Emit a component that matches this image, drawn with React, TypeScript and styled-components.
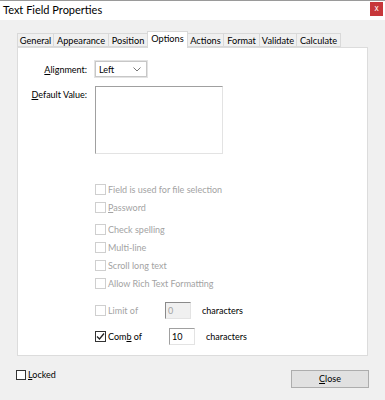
import styled, { createGlobalStyle } from "styled-components";

const GlobalStyle = createGlobalStyle`
  html, body {
    margin: 0;
    padding: 0;
    background: #f0f0f0;
  }
  * {
    box-sizing: border-box;
  }
`;

const tabs = [
  { name: "General", w: 37 },
  { name: "Appearance", w: 56 },
  { name: "Position", w: 40 },
  { name: "Options", w: 41 },
  { name: "Actions", w: 37 },
  { name: "Format", w: 37 },
  { name: "Validate", w: 38 },
  { name: "Calculate", w: 45 },
];

interface CheckProps {
  checked?: boolean;
  disabled?: boolean;
}

const Check: React.FC<CheckProps> = ({ checked, disabled }) => (
  <Box $disabled={disabled}>
    {checked && (
      <svg width="9" height="9" viewBox="0 0 9 9">
        <path d="M1 4.5 L3.5 7 L8 1.5" fill="none" stroke="#222" strokeWidth="1.3" />
      </svg>
    )}
  </Box>
);

const App = () => {
  return (
    <Window>
      <GlobalStyle />
      <TitleBar>
        <Title>Text Field Properties</Title>
        <CloseX>x</CloseX>
      </TitleBar>
      <Body>
        <TabStrip>
          {tabs.map((t) => (
            <Tab key={t.name} $w={t.w} $active={t.name === "Options"}>
              {t.name}
            </Tab>
          ))}
        </TabStrip>
        <Panel>
          <FieldRow>
            <Label>
              <U>A</U>lignment:
            </Label>
            <Select>
              <span>Left</span>
              <svg width="8" height="5" viewBox="0 0 8 5">
                <path d="M0.5 0.5 L4 4 L7.5 0.5" fill="none" stroke="#777" strokeWidth="1" />
              </svg>
            </Select>
          </FieldRow>
          <FieldRow $top>
            <Label $top>
              <U>D</U>efault Value:
            </Label>
            <TextArea />
          </FieldRow>

          <Checks>
            <Group>
              <CheckRow $disabled>
                <Check disabled />
                <span>Field is used for file selection</span>
              </CheckRow>
              <CheckRow $disabled>
                <Check disabled />
                <span>
                  <U>P</U>assword
                </span>
              </CheckRow>
            </Group>
            <Group>
              <CheckRow $disabled>
                <Check disabled />
                <span>Check spelling</span>
              </CheckRow>
              <CheckRow $disabled>
                <Check disabled />
                <span>Multi-line</span>
              </CheckRow>
              <CheckRow $disabled>
                <Check disabled />
                <span>Scroll long text</span>
              </CheckRow>
              <CheckRow $disabled>
                <Check disabled />
                <span>Allow Rich Text Formatting</span>
              </CheckRow>
            </Group>
            <CountRow $disabled $gap={5}>
              <Check disabled />
              <CountLabel $w={55}>Limit of</CountLabel>
              <Num $disabled>0</Num>
              <Chars>characters</Chars>
            </CountRow>
            <CountRow $gap={8}>
              <Check checked />
              <CountLabel $w={59}>
                Com<U>b</U> of
              </CountLabel>
              <Num>10</Num>
              <Chars>characters</Chars>
            </CountRow>
          </Checks>
        </Panel>
        <Footer>
          <LockRow>
            <LockBox />
            <span>
              <U>L</U>ocked
            </span>
          </LockRow>
          <Button>
            <U>C</U>lose
          </Button>
        </Footer>
      </Body>
    </Window>
  );
};

export default App;

const Window = styled.div`
  width: 385px;
  height: 400px;
  background: #f0f0f0;
  font-family: Lato, "Noto Sans", sans-serif;
  color: #000;
  display: flex;
  flex-direction: column;
  overflow: hidden;
`;

const TitleBar = styled.div`
  height: 20px;
  background: #ffffff;
  border-top: 1px solid #9a9a9a;
  display: flex;
  align-items: flex-start;
  justify-content: space-between;
`;

const Title = styled.div`
  font-size: 11px;
  line-height: 16px;
  padding-left: 3px;
  margin-top: 1px;
`;

const CloseX = styled.div`
  width: 13px;
  height: 14px;
  margin: 1px 2px 0 0;
  background: #c7373a;
  color: #fff;
  font-family: "Noto Sans", sans-serif;
  font-size: 8px;
  line-height: 12px;
  text-align: center;
`;

const Body = styled.div`
  flex: 1;
  display: flex;
  flex-direction: column;
  padding: 11px 17px 0 17px;
`;

const TabStrip = styled.div`
  display: flex;
  align-items: flex-end;
  height: 16px;
  position: relative;
  z-index: 1;
`;

const Tab = styled.div<{ $active?: boolean; $w: number }>`
  width: ${(p) => p.$w}px;
  flex: none;
  height: ${(p) => (p.$active ? "17px" : "14px")};
  margin-bottom: ${(p) => (p.$active ? "-1px" : "0")};
  margin-left: -1px;
  padding-bottom: ${(p) => (p.$active ? "3px" : "0")};
  background: ${(p) => (p.$active ? "#ffffff" : "#f0f0f0")};
  border: 1px solid #d9d9d9;
  border-bottom: ${(p) => (p.$active ? "none" : "1px solid #d9d9d9")};
  font-size: 9.2px;
  line-height: 13px;
  text-align: center;
  white-space: nowrap;
  &:first-child {
    margin-left: 0;
  }
`;

const Panel = styled.div`
  height: 309px;
  background: #ffffff;
  border: 1px solid #dcdcdc;
  padding-top: 13px;
  display: flex;
  flex-direction: column;
`;

const FieldRow = styled.div<{ $top?: boolean }>`
  display: grid;
  grid-template-columns: 69px auto;
  column-gap: 8px;
  align-items: ${(p) => (p.$top ? "start" : "center")};
  margin-bottom: 9px;
`;

const Label = styled.div<{ $top?: boolean }>`
  font-size: 9px;
  text-align: right;
  white-space: nowrap;
  line-height: 13px;
  padding-top: ${(p) => (p.$top ? "2px" : "0")};
`;

const U = styled.span`
  text-decoration: underline;
`;

const Select = styled.div`
  width: 52px;
  height: 16px;
  border: 1px solid #c7c7c7;
  outline: 1px solid #e3e3e3;
  background: #ffffff;
  display: flex;
  align-items: center;
  justify-content: space-between;
  padding: 0 5px 0 3px;
  font-size: 9px;
`;

const TextArea = styled.div`
  width: 128px;
  height: 68px;
  border-top: 1px solid #a0a0a0;
  border-left: 1px solid #a0a0a0;
  border-right: 1px solid #e3e3e3;
  border-bottom: 1px solid #e3e3e3;
`;

const Checks = styled.div`
  margin-left: 77px;
  margin-top: 17px;
  display: flex;
  flex-direction: column;
`;

const Group = styled.div`
  display: flex;
  flex-direction: column;
  margin-bottom: 4px;
`;

const CheckRow = styled.div<{ $disabled?: boolean }>`
  height: 18px;
  display: flex;
  align-items: center;
  gap: 2px;
  font-size: 9px;
  color: ${(p) => (p.$disabled ? "#a3a3a3" : "#000")};
`;

const CountRow = styled(CheckRow)<{ $gap: number }>`
  margin-top: ${(p) => p.$gap}px;
`;

const Box = styled.div<{ $disabled?: boolean }>`
  width: 11px;
  height: 11px;
  border: 1px solid ${(p) => (p.$disabled ? "#cfcfcf" : "#333333")};
  background: #fff;
  display: flex;
  align-items: center;
  justify-content: center;
`;

const CountLabel = styled.span<{ $w: number }>`
  width: ${(p) => p.$w}px;
`;

const Num = styled.div<{ $disabled?: boolean }>`
  width: 26px;
  height: 17px;
  border-top: 1px solid ${(p) => (p.$disabled ? "#8a8a8a" : "#a0a0a0")};
  border-left: 1px solid ${(p) => (p.$disabled ? "#8a8a8a" : "#a0a0a0")};
  border-right: 1px solid #e3e3e3;
  border-bottom: 1px solid #e3e3e3;
  background: ${(p) => (p.$disabled ? "#f0f0f0" : "#fff")};
  color: ${(p) => (p.$disabled ? "#a3a3a3" : "#000")};
  font-size: 9px;
  line-height: 15px;
  padding-left: 2px;
`;

const Chars = styled.span`
  margin-left: 9px;
  color: #000;
`;

const Footer = styled.div`
  display: flex;
  justify-content: space-between;
  align-items: flex-start;
  padding-top: 14px;
  margin-left: -1px;
`;

const LockRow = styled.div`
  display: flex;
  align-items: center;
  gap: 2px;
  font-size: 9px;
  margin-top: -1px;
`;

const LockBox = styled.div`
  width: 10px;
  height: 10px;
  border: 1px solid #333;
  background: #fff;
`;

const Button = styled.div`
  width: 78px;
  height: 18px;
  margin-right: -1px;
  border: 1px solid #adadad;
  background: #e1e1e1;
  font-size: 9px;
  line-height: 16px;
  text-align: center;
`;
